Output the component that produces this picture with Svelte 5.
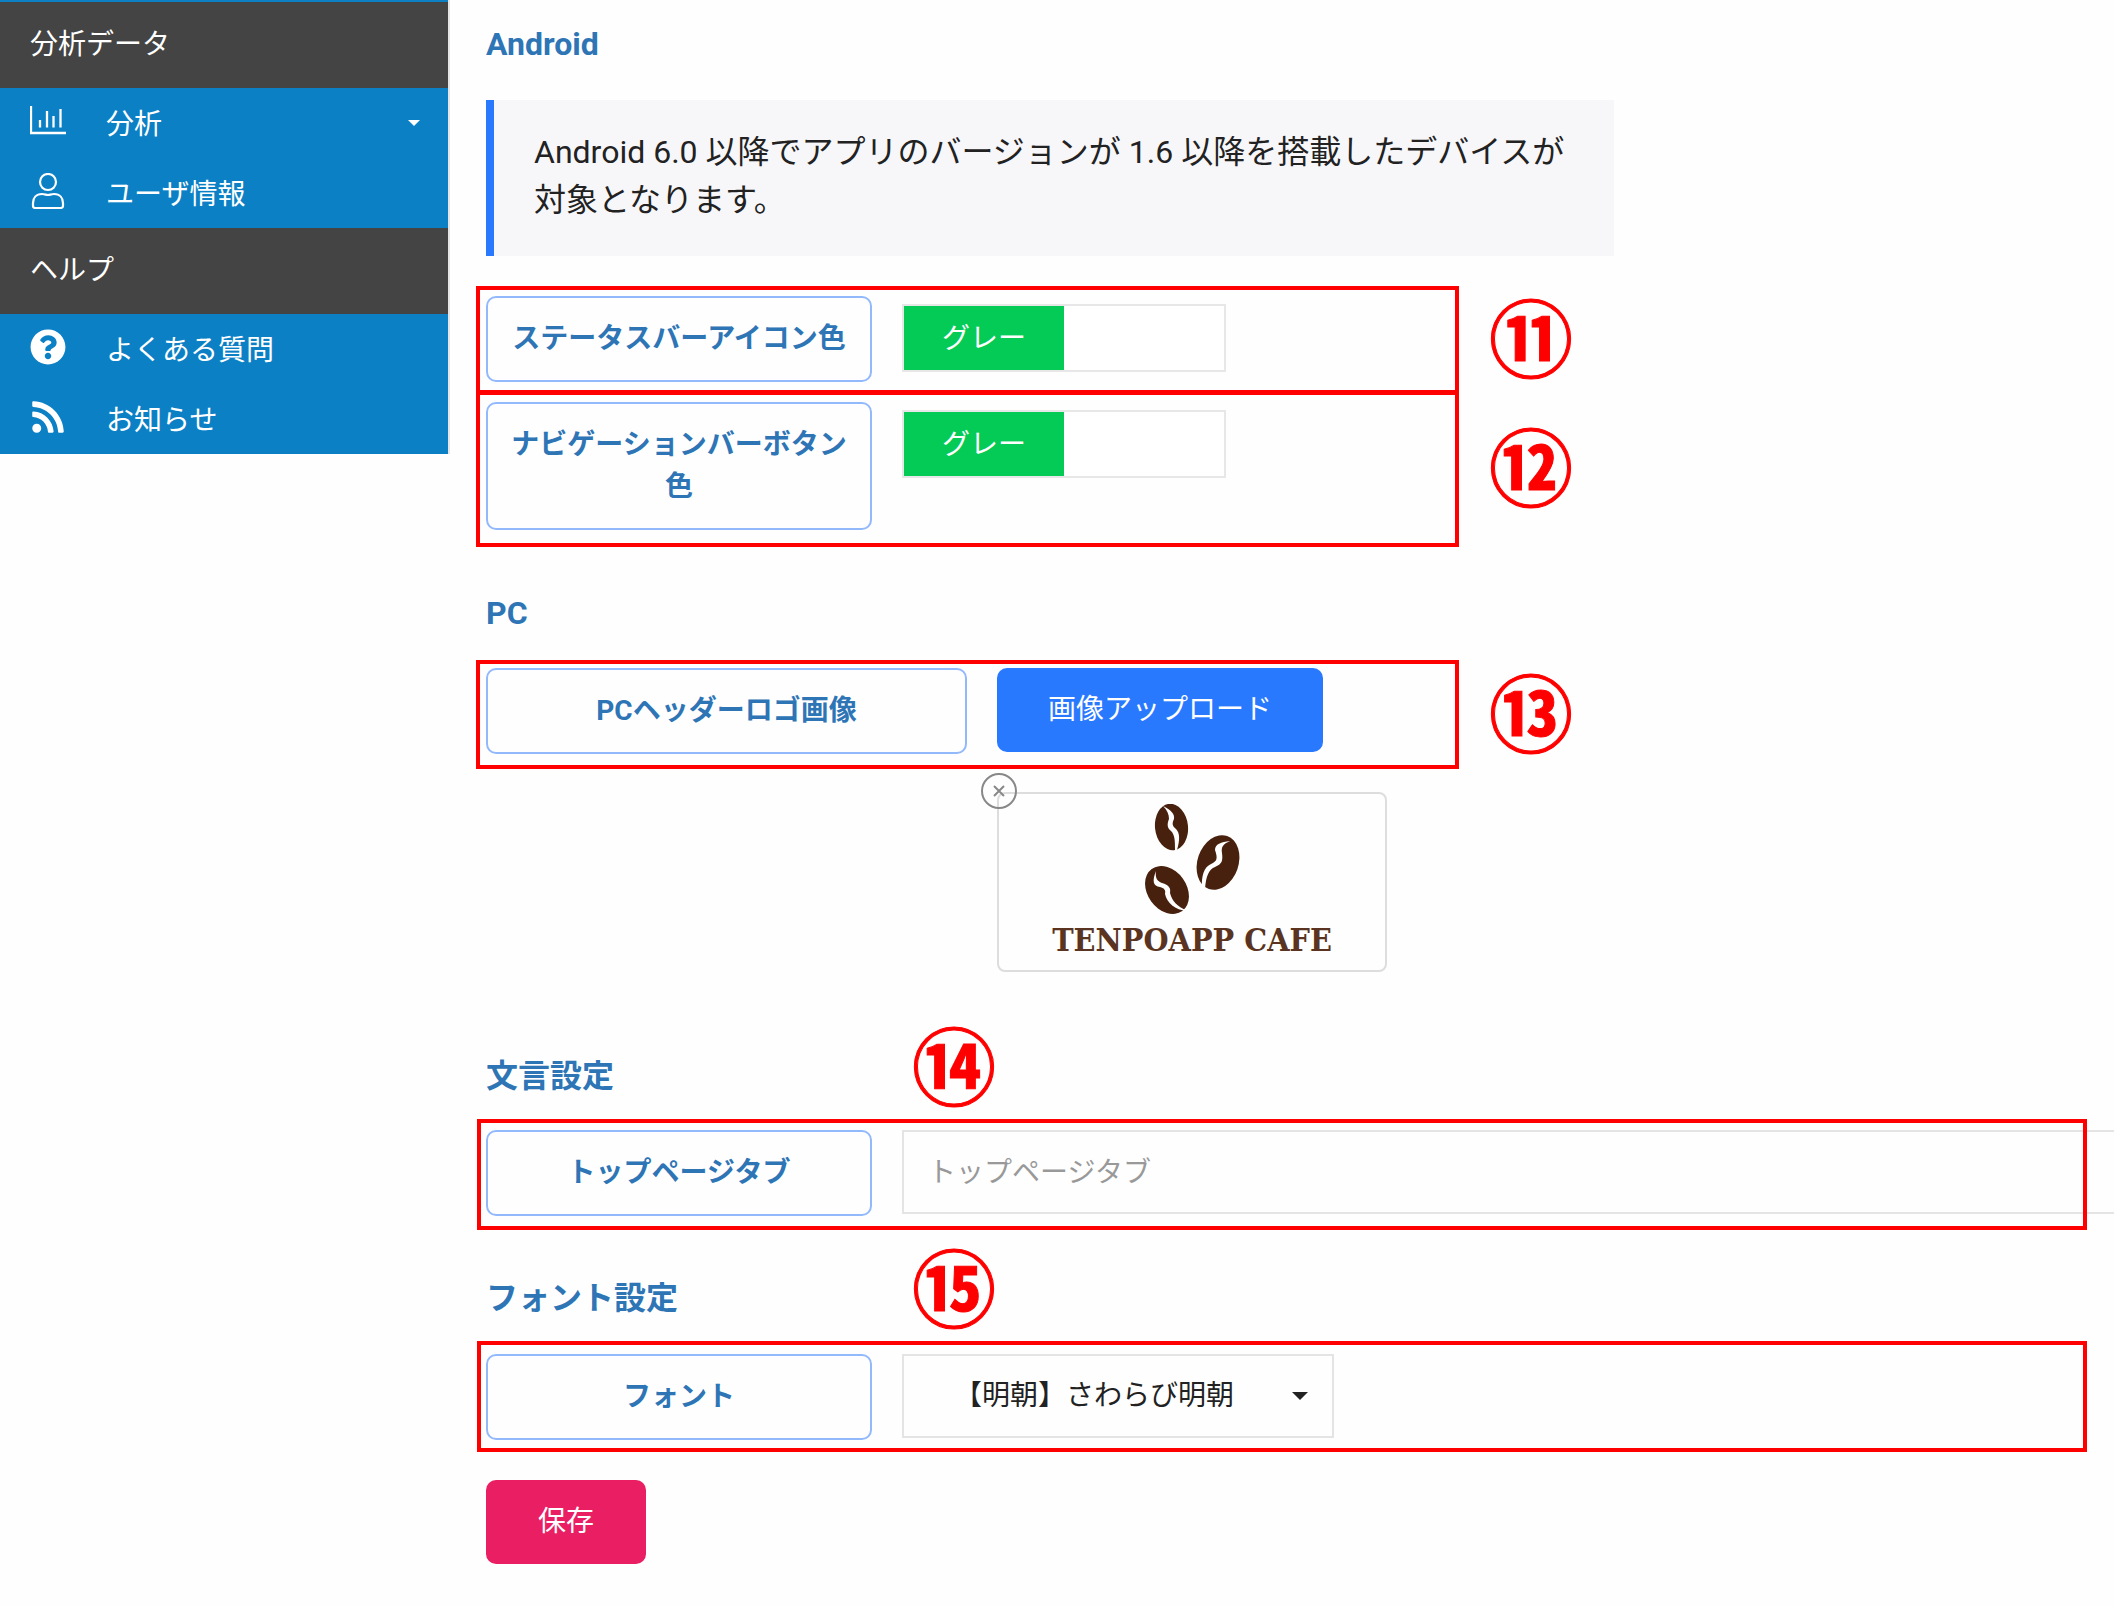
<script>
  let statusGray = $state(true);
  let navGray = $state(true);
  let topTab = $state('');
  let font = $state('sawarabi');
</script>

<div class="page">
  <nav class="side">
    <h2 class="side-head">分析データ</h2>
    <ul>
      <li>
        <a href="#analysis">
          <svg viewBox="0 0 36 36" class="icon" aria-hidden="true">
            <path d="M1 3v27h35M10 17v7.500M17 8v16.500M23.500 13v11.500M30.500 6v18.500" fill="none" stroke="#fff" stroke-width="2.300" />
          </svg>
          <span>分析</span>
          <svg viewBox="0 0 12 6" class="side-caret" aria-hidden="true"><path d="M0 0h12l-6 6z" fill="#fff" /></svg>
        </a>
      </li>
      <li>
        <a href="#users">
          <svg viewBox="0 0 36 36" class="icon" aria-hidden="true">
            <g fill="none" stroke="#fff" stroke-width="2.200">
              <circle cx="18" cy="9" r="8" />
              <path d="M12 21c3 0 4 1 6 1s3-1 6-1c6 0 9 4 9 9v3c0 1.500-1 2-2.500 2h-25c-1.500 0-2.500-.5-2.500-2v-3c0-5 3-9 9-9z" />
            </g>
          </svg>
          <span>ユーザ情報</span>
        </a>
      </li>
    </ul>
    <h2 class="side-head">ヘルプ</h2>
    <ul>
      <li>
        <a href="#faq">
          <svg viewBox="0 0 512 512" class="icon" aria-hidden="true">
            <path fill="#fff" d="M504 256c0 136.997-111.043 248-248 248S8 392.997 8 256C8 119.083 119.043 8 256 8s248 111.083 248 248zM262.655 90c-54.497 0-89.255 22.957-116.549 63.758-3.536 5.286-2.353 12.415 2.715 16.258l34.699 26.31c5.205 3.947 12.621 3.008 16.665-2.122 17.864-22.658 30.113-35.797 57.303-35.797 20.429 0 45.698 13.148 45.698 32.958 0 14.976-12.363 22.667-32.534 33.976C247.128 238.528 216 254.941 216 296v4c0 6.627 5.373 12 12 12h56c6.627 0 12-5.373 12-12v-1.333c0-28.462 83.186-29.647 83.186-106.667 0-58.002-60.165-102-116.531-102zM256 338c-25.365 0-46 20.635-46 46 0 25.364 20.635 46 46 46s46-20.636 46-46c0-25.364-20.635-46-46-46z" />
          </svg>
          <span>よくある質問</span>
        </a>
      </li>
      <li>
        <a href="#news">
          <svg viewBox="-32 0 512 512" class="icon" aria-hidden="true">
            <path fill="#fff" d="M128.081 415.959c0 35.369-28.672 64.041-64.041 64.041S0 451.328 0 415.959s28.672-64.041 64.041-64.041 64.04 28.673 64.04 64.041zm175.66 47.25c-8.354-154.6-132.185-278.587-286.95-286.95C7.656 175.765 0 183.105 0 192.253v48.069c0 8.415 6.49 15.472 14.887 16.018 111.832 7.284 201.473 96.702 208.772 208.772.547 8.397 7.604 14.887 16.018 14.887h48.069c9.149.001 16.489-7.655 15.995-16.79zm144.249.288C439.596 229.677 251.465 40.445 16.503 32.01 7.473 31.686 0 38.981 0 48.016v48.068c0 8.625 6.835 15.645 15.453 15.999 191.179 7.839 344.627 161.316 352.465 352.465.353 8.618 7.373 15.453 15.999 15.453h48.068c9.034-.001 16.329-7.474 16.005-16.504z" />
          </svg>
          <span>お知らせ</span>
        </a>
      </li>
    </ul>
  </nav>

  <main>
    <section class="android">
      <h3>Android</h3>
      <p class="note">Android 6.0 以降でアプリのバージョンが 1.6 以降を搭載したデバイスが対象となります。</p>
      <div class="line">
        <div class="frame">
          <label class="tag" for="status-color">ステータスバーアイコン色</label>
          <button id="status-color" class="toggle" class:off={!statusGray} type="button" role="switch" aria-checked={statusGray} onclick={() => (statusGray = !statusGray)}>
            <span>グレー</span>
          </button>
        </div>
        <span class="num">⑪</span>
      </div>
      <div class="line joined">
        <div class="frame tall">
          <label class="tag" for="nav-color">ナビゲーションバーボタン色</label>
          <button id="nav-color" class="toggle" class:off={!navGray} type="button" role="switch" aria-checked={navGray} onclick={() => (navGray = !navGray)}>
            <span>グレー</span>
          </button>
        </div>
        <span class="num">⑫</span>
      </div>
    </section>

    <section class="pc">
      <h3>PC</h3>
      <div class="line">
        <div class="frame close">
          <label class="tag wide" for="logo-upload">PCヘッダーロゴ画像</label>
          <button id="logo-upload" class="btn upload" type="button">画像アップロード</button>
        </div>
        <span class="num">⑬</span>
      </div>
      <div class="preview">
        <button class="remove" type="button" aria-label="削除">
          <svg viewBox="0 0 36 36" aria-hidden="true">
            <circle cx="18" cy="18" r="17" fill="none" stroke="#888" stroke-width="2" />
            <path d="M13 13l10 10M23 13l-10 10" stroke="#888" stroke-width="2" />
          </svg>
        </button>
        <svg class="beans" viewBox="0 0 100 112" aria-hidden="true">
          <g fill="#48200e">
            <ellipse cx="29.500" cy="23" rx="16.500" ry="23.300" transform="rotate(-6 29.500 23)" />
            <ellipse cx="76" cy="58.500" rx="20.500" ry="28" transform="rotate(19 76 58.500)" />
            <ellipse cx="25" cy="86" rx="19.500" ry="26" transform="rotate(-36 25 86)" />
          </g>
          <g fill="#fff">
            <path d="M21 2c8 4 12 8 11 13-2 4-2 7 2 10 4 4 4 11 1 21h-2c0-9 0-15-4-19-4-3-4-7-2-12 0-5-2-9-6-13z" />
            <path d="M88 37c-7 3-9 6-8 12 1 8 0 11-7 14-6 2-9 9-10 22h-3c-1-13 2-22 9-25 6-3 7-5 4-14 0-6 6-8 15-9z" />
            <path d="M14 67c-1 7 1 10 6 12 7 2 9 5 8 10 2 8 7 13 17 18-12-1-20-8-22-17 1-4-1-6-5-7-7-1-8-6-4-16z" />
          </g>
        </svg>
        <span class="brand">TENPOAPP CAFE</span>
      </div>
    </section>

    <section class="words">
      <div class="titled">
        <h3>文言設定</h3>
        <span class="num">⑭</span>
      </div>
      <div class="frame full">
        <label class="tag" for="top-tab">トップページタブ</label>
        <input id="top-tab" type="text" placeholder="トップページタブ" bind:value={topTab} />
      </div>
    </section>

    <section class="fonts">
      <div class="titled">
        <h3>フォント設定</h3>
        <span class="num">⑮</span>
      </div>
      <div class="frame full roomy">
        <label class="tag" for="font">フォント</label>
        <div class="select">
          <select id="font" bind:value={font}>
            <option value="sawarabi">【明朝】さわらび明朝</option>
          </select>
          <svg viewBox="0 0 16 8" aria-hidden="true"><path d="M0 0h16l-8 8z" fill="#222" /></svg>
        </div>
      </div>
    </section>

    <button class="btn save" type="button">保存</button>
  </main>
</div>

<style>
  :global(body) {
    margin: 0;
    background: #fefefe;
  }
  .page {
    display: flex;
    align-items: flex-start;
    overflow: hidden;
    font-family: Roboto, 'Noto Sans CJK JP', sans-serif;
    font-size: 28px;
    line-height: 42px;
    color: #222;
  }
  .page * {
    box-sizing: border-box;
  }
  button,
  input,
  select {
    font: inherit;
    color: inherit;
    margin: 0;
  }
  .side {
    flex: 0 0 450px;
    padding-top: 2px;
    border-right: 2px solid #e5e5e5;
    background: #0c80c5;
    color: #fff;
  }
  .side-head {
    margin: 0;
    padding: 22px 30px;
    background: #444;
    font-size: 28px;
    font-weight: 400;
  }
  ul {
    margin: 0;
    padding: 0;
    list-style: none;
  }
  .side a {
    display: flex;
    align-items: center;
    height: 70px;
    padding: 0 28px 0 30px;
    color: #fff;
    text-decoration: none;
  }
  .side a span {
    padding-top: 4px;
  }
  .icon {
    width: 36px;
    height: 36px;
    margin: 0 40px 4px 0;
  }
  .side-caret {
    width: 12px;
    height: 6px;
    margin-left: auto;
  }
  main {
    flex: 1;
    min-width: 0;
    padding: 20px 0 42px 36px;
  }
  h3 {
    margin: 0;
    font-size: 32px;
    line-height: 48px;
    font-weight: 700;
    color: #2e75b6;
  }
  .note {
    max-width: 1128px;
    margin: 32px 0 30px;
    padding: 28px 40px 32px;
    border-left: 8px solid #2979ff;
    background: #f7f7fa;
    font-size: 32px;
    line-height: 48px;
  }
  .line {
    display: flex;
    align-items: center;
    gap: 30px;
    margin-left: -10px;
  }
  .joined {
    margin-top: -3px;
  }
  .frame {
    position: relative;
    display: flex;
    align-items: flex-start;
    gap: 30px;
    flex: 0 1 983px;
    padding: 10px 10px 12px;
  }
  .frame::after {
    content: '';
    position: absolute;
    inset: 0;
    border: 4px solid #f00;
    pointer-events: none;
  }
  .frame.tall {
    padding: 11px 10px 17px;
  }
  .frame.close {
    padding: 8px 10px 15px;
  }
  .frame.full {
    margin: 0 27px 0 -9px;
    padding: 11px 9px 14px;
  }
  .frame.roomy {
    padding: 13px 9px 12px;
  }
  .tag {
    flex: 0 0 386px;
    padding: 20px;
    border: 2px solid #93b9fd;
    border-radius: 10px;
    color: #2e75b6;
    font-weight: 700;
    text-align: center;
  }
  .tag.wide {
    flex-basis: 481px;
  }
  .toggle {
    display: flex;
    width: 324px;
    height: 68px;
    margin-top: 8px;
    padding: 0;
    border: 2px solid #e7e7e7;
    background: #fff;
  }
  .toggle.off {
    justify-content: flex-end;
  }
  .toggle span {
    width: 50%;
    padding: 12px 0 10px;
    background: #04cb56;
    color: #fff;
  }
  .num {
    padding-bottom: 10px;
    font-family: 'Noto Sans CJK JP', sans-serif;
    font-size: 84px;
    line-height: 70px;
    font-weight: 700;
    color: #f00;
    -webkit-text-stroke: 1px #f00;
  }
  .btn {
    height: 84px;
    padding: 0 52px;
    border: 0;
    border-radius: 10px;
    background: #2979ff;
    color: #fff;
  }
  .btn.upload {
    padding: 0 51px;
  }
  .save {
    background: #e91e63;
    margin-top: 28px;
  }
  .pc {
    margin-top: 42px;
  }
  .pc h3 {
    margin-bottom: 23px;
  }
  .preview {
    position: relative;
    display: flex;
    flex-direction: column;
    align-items: center;
    width: 390px;
    height: 180px;
    margin: 23px 0 0 511px;
    padding-top: 10px;
    border: 2px solid #ddd;
    border-radius: 8px;
  }
  .remove {
    position: absolute;
    top: -21px;
    left: -18px;
    width: 36px;
    height: 36px;
    padding: 0;
    border: 0;
    background: none;
  }
  .remove svg {
    display: block;
  }
  .beans {
    width: 100px;
    height: 112px;
    flex: none;
  }
  .brand {
    padding-top: 4px;
    font-family: 'DejaVu Serif Condensed', 'DejaVu Serif', serif;
    font-size: 32px;
    line-height: 40px;
    font-weight: 700;
    white-space: nowrap;
    color: #5a3420;
  }
  .titled {
    display: flex;
    align-items: flex-start;
    height: 91px;
  }
  .titled h3 {
    flex: 0 0 426px;
    padding-top: 24px;
  }
  .words {
    margin-top: 56px;
  }
  .fonts {
    margin-top: 20px;
  }
  input {
    flex: 0 0 1300px;
    height: 84px;
    padding: 0 24px;
    border: 2px solid #e4e4e4;
    border-radius: 0;
    background: transparent;
  }
  input::placeholder {
    color: #999;
    opacity: 1;
  }
  .select {
    position: relative;
    width: 432px;
  }
  select {
    display: block;
    width: 100%;
    height: 84px;
    padding: 0 50px;
    border: 2px solid #e4e4e4;
    border-radius: 0;
    background: transparent;
    appearance: none;
  }
  .select svg {
    position: absolute;
    top: 38px;
    right: 26px;
    width: 16px;
    height: 8px;
    pointer-events: none;
  }
</style>
